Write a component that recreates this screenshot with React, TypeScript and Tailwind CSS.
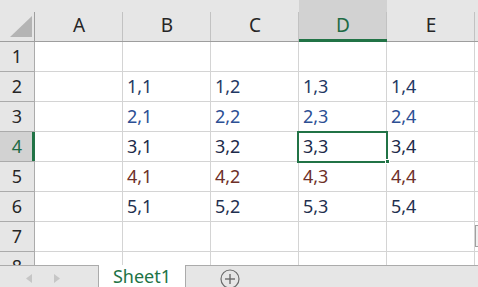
const cols = ['A', 'B', 'C', 'D', 'E']
const rowColors: Record<number, string> = {
  2: 'text-[#1f3864]',
  3: 'text-[#2c4f94]',
  4: 'text-[#1c2a4a]',
  5: 'text-[#6e3028]',
  6: 'text-[#1f3050]',
}

function cellValue(row: number, col: number) {
  if (row < 2 || row > 6 || col < 1) return ''
  return `${row - 1},${col}`
}

function ColumnHeader({ label, selected }: { label: string; selected: boolean }) {
  return (
    <div
      className={`relative flex h-[42px] w-[88px] shrink-0 items-center justify-center border-b border-[#9e9e9e] pt-[10px] text-[19px] ${
        selected ? 'bg-[#d2d2d2] text-[#1e6b45]' : 'bg-[#e6e6e6] text-[#262626]'
      }`}
    >
      {label}
      <div className="absolute right-0 top-[12px] bottom-0 w-px bg-[#c2c2c2]" />
      {selected && <div className="absolute -bottom-px left-0 right-0 h-[3px] bg-[#217346]" />}
    </div>
  )
}

function Row({ n }: { n: number }) {
  const selected = n === 4
  return (
    <div className="flex h-[30px] shrink-0">
      <div
        className={`relative flex w-[35px] shrink-0 items-center justify-center border-b border-r border-[#ababab] text-[18px] ${
          selected ? 'bg-[#d2d2d2] text-[#1e6b45]' : 'bg-[#e6e6e6] text-[#262626]'
        }`}
      >
        {n}
        {selected && <div className="absolute -right-px top-0 bottom-0 w-[3px] bg-[#217346]" />}
      </div>
      {cols.map((c, i) => (
        <div
          key={c}
          className={`flex w-[88px] shrink-0 items-center border-b border-r border-[#d4d4d4] pl-[4px] text-[18px] ${
            rowColors[n] ?? ''
          }`}
        >
          {cellValue(n, i)}
        </div>
      ))}
      <div className="flex-1 border-b border-[#d4d4d4]" />
    </div>
  )
}

export default function App() {
  return (
    <div
      className="flex h-[287px] w-[478px] flex-col overflow-hidden bg-white"
      style={{ fontFamily: '"Noto Sans", "Noto Sans CJK JP", sans-serif' }}
    >
      {/* column headers */}
      <div className="flex h-[42px] shrink-0 bg-[#e6e6e6]">
        <div className="relative h-[42px] w-[35px] shrink-0 border-b border-[#9e9e9e]">
          <svg className="absolute left-[10px] top-[16px]" width="22" height="21" viewBox="0 0 22 21">
            <polygon points="22,0 22,21 0,21" fill="#b4b4b4" />
          </svg>
          <div className="absolute right-0 top-[12px] bottom-0 w-px bg-[#9e9e9e]" />
        </div>
        {cols.map((c) => (
          <ColumnHeader key={c} label={c} selected={c === 'D'} />
        ))}
        <div className="flex-1 border-b border-[#9e9e9e]" />
      </div>

      {/* rows */}
      <div className="relative flex flex-1 flex-col overflow-hidden">
        {[1, 2, 3, 4, 5, 6, 7, 8].map((n) => (
          <Row key={n} n={n} />
        ))}
        {/* active cell D4 */}
        <div className="absolute left-[297px] top-[89px] h-[32px] w-[91px] border-2 border-[#217346]" />
        <div className="absolute left-[385px] top-[117px] h-[5px] w-[5px] border border-white bg-[#217346]" />
        {/* edge of scroll control */}
        <div className="absolute left-[475px] top-[183px] h-[22px] w-[6px] border border-[#a0a0a0] bg-[#f0f0f0]" />
      </div>

      {/* sheet tabs */}
      <div className="flex h-[22px] shrink-0 bg-[#e6e6e6]">
        <div className="flex w-[99px] items-center gap-[22px] border-t border-r border-[#ababab] pl-[26px] pt-[3px]">
          <svg width="6" height="9" viewBox="0 0 6 9">
            <polygon points="6,0 6,9 0,4.5" fill="#c6c6c6" />
          </svg>
          <svg width="6" height="9" viewBox="0 0 6 9">
            <polygon points="0,0 0,9 6,4.5" fill="#c6c6c6" />
          </svg>
        </div>
        <div className="flex w-[86px] items-start justify-center bg-white text-[18px] leading-[22px] text-[#217346]">
          Sheet1
        </div>
        <div className="flex flex-1 items-center border-t border-l border-[#ababab] pl-[34px]">
          <svg width="20" height="20" viewBox="0 0 20 20" className="mt-[4px]">
            <circle cx="10" cy="10" r="9" fill="none" stroke="#6b6b6b" strokeWidth="1.2" />
            <line x1="10" y1="5" x2="10" y2="15" stroke="#6b6b6b" strokeWidth="1.4" />
            <line x1="5" y1="10" x2="15" y2="10" stroke="#6b6b6b" strokeWidth="1.4" />
          </svg>
        </div>
      </div>
    </div>
  )
}
